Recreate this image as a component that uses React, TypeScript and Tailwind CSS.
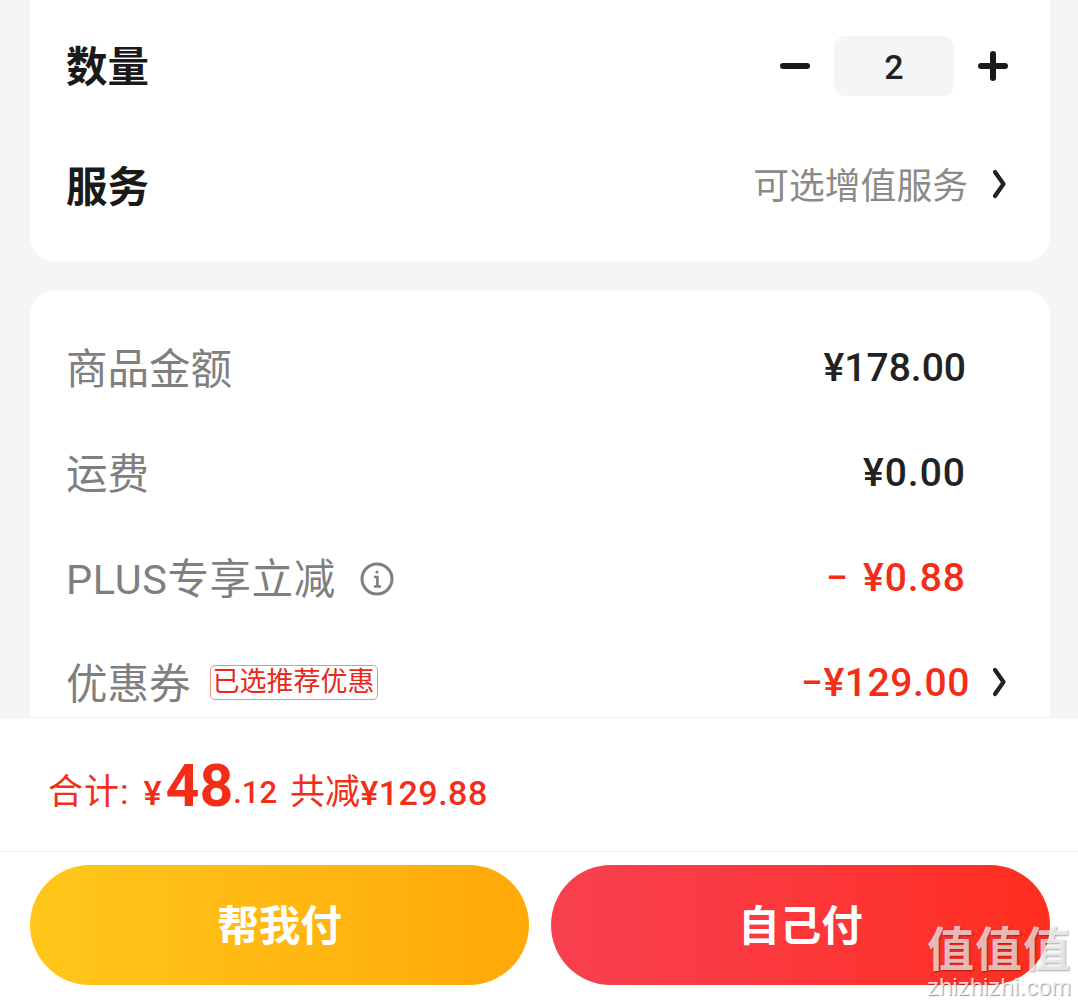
import React from 'react'

const font = { cjk: "font-['Roboto','Noto_Sans_CJK_SC',sans-serif]" }

const Chevron = () => (
  <svg viewBox="0 0 16 32" className="w-[16px] h-[32px]" fill="none" stroke="#222" strokeWidth="4.2" strokeLinecap="round" strokeLinejoin="round">
    <path d="M3 4 L11.5 16 L3 28" />
  </svg>
)

const Watermark = () => (
  <div className="absolute left-[925px] top-[924px] w-[148px] text-center pointer-events-none">
    <div className="text-[47px] leading-[52px] font-bold text-white/70 tracking-[1px] [text-shadow:1px_1px_2px_rgba(0,0,0,0.35)] whitespace-nowrap">值值值</div>
    <div className="text-[24px] leading-[24px] mt-[-1px] font-['Liberation_Sans',sans-serif] text-white/80 [text-shadow:1px_1px_1px_rgba(0,0,0,0.4)]">zhizhizhi.com</div>
  </div>
)

export default function App() {
  return (
    <div className={`relative h-[1006px] w-[1078px] overflow-hidden bg-[#f5f5f5] flex flex-col ${font.cjk}`}>
      <div className="flex-1 min-h-0 overflow-hidden pl-[30px] pr-[28px]">
        {/* 数量 / 服务 */}
        <div className="h-[261px] bg-white rounded-b-[24px] pt-[6px] pl-[36px] pr-[42px]">
          <div className="h-[120px] flex items-center justify-between">
            <span className="text-[41.5px] font-bold text-[#1a1a1a] mt-[4px]">数量</span>
            <div className="flex items-center">
              <div className="w-[30px] h-[6px] rounded-full bg-[#1a1a1a]" />
              <div className="w-[120px] h-[60px] mx-[24px] rounded-[12px] bg-[#f5f5f5] flex items-center justify-center pt-[2px] text-[34px] font-medium text-[#222]">2</div>
              <div className="relative w-[30px] h-[30px]">
                <div className="absolute left-0 top-[12px] w-[30px] h-[6px] rounded-full bg-[#1a1a1a]" />
                <div className="absolute top-0 left-[12px] h-[30px] w-[6px] rounded-full bg-[#1a1a1a]" />
              </div>
            </div>
          </div>
          <div className="h-[120px] flex items-center justify-between">
            <span className="text-[41.5px] font-bold text-[#1a1a1a] mt-[4px]">服务</span>
            <div className="flex items-center">
              <span className="text-[35.8px] text-[#8a8a8a] mt-[3px]">可选增值服务</span>
              <div className="ml-[24px] -mt-[5px]"><Chevron /></div>
            </div>
          </div>
        </div>

        {/* 金额明细 */}
        <div className="mt-[30px] bg-white rounded-t-[24px] pt-[27px] pl-[36px] pr-[42px] text-[41.5px] text-[#7f7f7f]">
          <div className="h-[105px] flex items-center justify-between">
            <span>商品金额</span>
            <span className="mr-[42px] text-[#222] text-[39px] font-medium -mt-[4px]">¥178.00</span>
          </div>
          <div className="h-[105px] flex items-center justify-between">
            <span>运费</span>
            <span className="mr-[42px] text-[#222] text-[39px] font-medium -mt-[4px] tracking-[1px]">¥0.00</span>
          </div>
          <div className="h-[105px] flex items-center justify-between">
            <div className="flex items-center">
              <span className="tracking-[0.6px]">PLUS专享立减</span>
              <svg viewBox="0 0 34 34" className="w-[34px] h-[34px] ml-[24px] -mt-[4px]" fill="none" stroke="#7f7f7f" strokeWidth="3">
                <circle cx="17" cy="17" r="15" />
                <path d="M14 15h3.4v9M14 24.5h7" strokeWidth="2.6" />
                <circle cx="17" cy="10" r="1.6" fill="#7f7f7f" stroke="none" />
              </svg>
            </div>
            <span className="mr-[42px] text-[#f32d17] text-[39px] font-medium -mt-[4px] tracking-[1px] flex gap-[14px]">
              <span>−</span>
              <span>¥0.88</span>
            </span>
          </div>
          <div className="h-[105px] flex items-center justify-between">
            <div className="flex items-center">
              <span>优惠券</span>
              <span className="ml-[19px] -mt-[6px] h-[35px] w-[168px] flex items-center justify-center rounded-[5px] border border-[#f0908a] text-[27px] text-[#e8281a]">已选推荐优惠</span>
            </div>
            <div className="flex items-center">
              <span className="text-[#f32d17] text-[39px] font-medium -mt-[4px] tracking-[0.6px]">−¥129.00</span>
              <div className="ml-[22px] -mt-[8px]"><Chevron /></div>
            </div>
          </div>
        </div>
      </div>

      {/* 底部结算 */}
      <div className="shrink-0 bg-white border-t border-[#efefef]">
        <div className="h-[134px] pl-[48px] pt-[17px] flex items-center text-[#f32d17] border-b border-[#f2f2f2] whitespace-pre">
          <span className="text-[35px] tracking-[1px]">合计:</span>
          <span className="text-[34px] ml-[14px] font-medium">¥</span>
          <span className="text-[59px] leading-none font-bold -mt-[15px] ml-[4px]">48</span>
          <span className="text-[31px] font-medium">.12</span>
          <span className="text-[35px] ml-[13px]">共减</span>
          <span className="text-[34px] font-medium tracking-[0.5px]">¥129.88</span>
        </div>
        <div className="h-[154px] px-[30px] pr-[28px] pt-[13px] flex gap-[22px]">
          <button className="flex-1 h-[120px] pt-[4px] rounded-[60px] bg-gradient-to-r from-[#ffc71a] to-[#ffa908] text-white text-[41.5px] font-bold">帮我付</button>
          <button className="flex-1 h-[120px] pt-[4px] rounded-[60px] bg-gradient-to-r from-[#f8404f] to-[#ff2d1c] text-white text-[41.5px] font-bold">自己付</button>
        </div>
      </div>

      <Watermark />
    </div>
  )
}
